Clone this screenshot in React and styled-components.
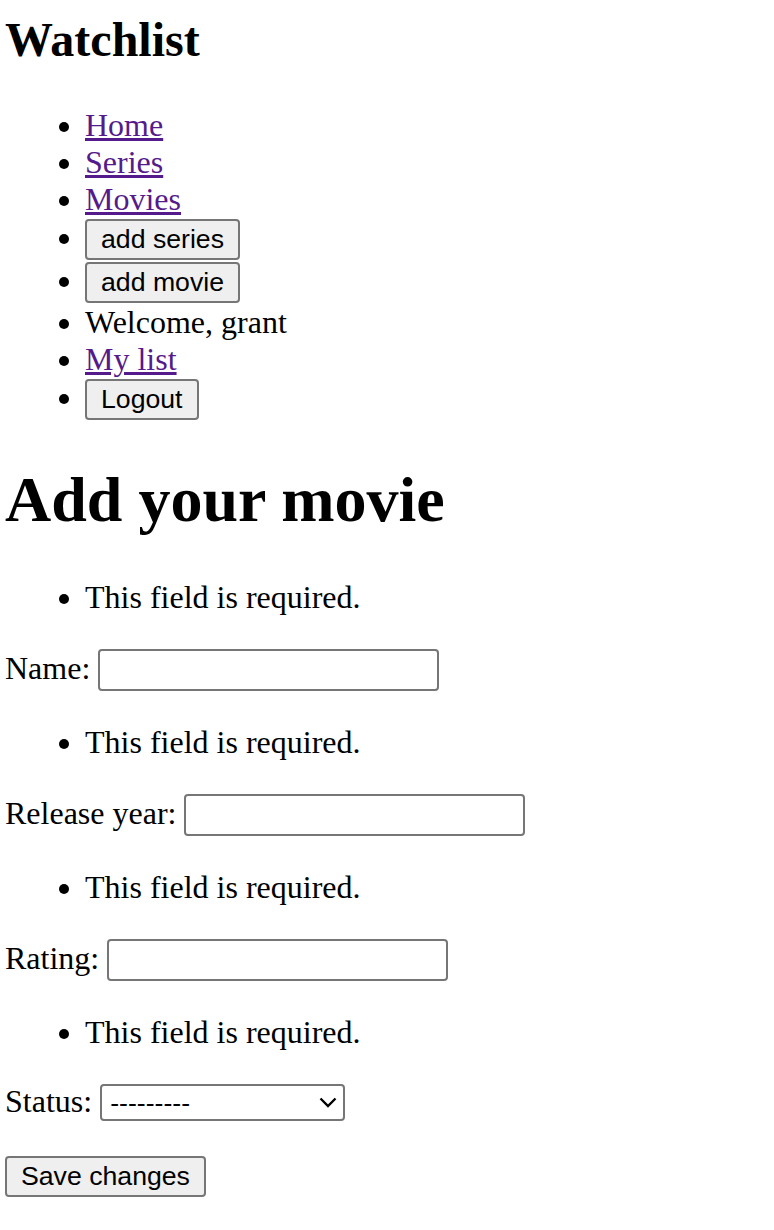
import React from 'react'
import styled, { createGlobalStyle } from 'styled-components'

const GlobalStyle = createGlobalStyle`
  html, body {
    margin: 0;
    padding: 0;
    background: #ffffff;
  }
  body {
    font-family: 'Liberation Serif', 'Times New Roman', serif;
    font-size: 32px;
    color: #000000;
  }
`

const Page = styled.div`
  padding: 0 5px;
`

const SiteTitle = styled.h2`
  font-size: 48px;
  font-weight: bold;
  margin: 12px 0 40px;
`

const NavList = styled.ul`
  margin: 0;
  padding-left: 80px;
`

const NavItem = styled.li`
  line-height: normal;
`

const NavLink = styled.a`
  color: #551a8b;
  text-decoration: underline;
  text-decoration-thickness: 3px;
  text-underline-offset: 2px;
`

const Button = styled.button`
  font-family: 'Liberation Sans', Arial, sans-serif;
  font-size: 26.67px;
  color: #000000;
  background: #efefef;
  border: 2px solid #767676;
  border-radius: 4px;
  height: 41px;
  box-sizing: border-box;
  padding: 0 14px;
  margin: 1px 0;
  line-height: normal;
`

const PageTitle = styled.h1`
  font-size: 64px;
  font-weight: bold;
  margin: 42px 0;
`

const ErrorList = styled.ul`
  margin: 32px 0;
  padding-left: 80px;
`

const Field = styled.p`
  margin: 32px 0;
`

const Label = styled.label`
  margin-right: 8px;
`

const TextInput = styled.input`
  font-family: 'Liberation Sans', Arial, sans-serif;
  font-size: 26.67px;
  width: 341px;
  height: 42px;
  box-sizing: border-box;
  border: 2px solid #767676;
  border-radius: 4px;
  padding: 2px 4px;
  margin: 1px 0;
  background: #ffffff;
`

const SelectWrap = styled.span`
  position: relative;
  display: inline-block;
  vertical-align: top;
  margin: 1px 0 2px;
`

const Select = styled.select`
  appearance: none;
  display: block;
  font-family: 'Liberation Sans', Arial, sans-serif;
  font-size: 26.67px;
  width: 245px;
  height: 37px;
  box-sizing: border-box;
  border: 2px solid #767676;
  border-radius: 4px;
  background: #ffffff;
  color: #000000;
  padding: 0 40px 0 8px;
  margin: 0;
`

const Chevron = styled.svg`
  position: absolute;
  right: 8px;
  top: 13px;
  pointer-events: none;
`

const Actions = styled.div`
  margin: 32px 0;
`

const fields = [
  { id: 'name', label: 'Name:' },
  { id: 'year', label: 'Release year:' },
  { id: 'rating', label: 'Rating:' },
]

export default function App() {
  return (
    <Page>
      <GlobalStyle />
      <SiteTitle>Watchlist</SiteTitle>
      <NavList>
        <NavItem><NavLink href="#">Home</NavLink></NavItem>
        <NavItem><NavLink href="#">Series</NavLink></NavItem>
        <NavItem><NavLink href="#">Movies</NavLink></NavItem>
        <NavItem><Button>add series</Button></NavItem>
        <NavItem><Button>add movie</Button></NavItem>
        <NavItem>Welcome, grant</NavItem>
        <NavItem><NavLink href="#">My list</NavLink></NavItem>
        <NavItem><Button>Logout</Button></NavItem>
      </NavList>
      <PageTitle>Add your movie</PageTitle>
      <form onSubmit={e => e.preventDefault()}>
        {fields.map(f => (
          <React.Fragment key={f.id}>
            <ErrorList><li>This field is required.</li></ErrorList>
            <Field>
              <Label htmlFor={f.id}>{f.label}</Label>
              <TextInput id={f.id} type="text" />
            </Field>
          </React.Fragment>
        ))}
        <ErrorList><li>This field is required.</li></ErrorList>
        <Field>
          <Label htmlFor="status">Status:</Label>
          <SelectWrap>
            <Select id="status" defaultValue="">
              <option value="">---------</option>
            </Select>
            <Chevron width="18" height="11" viewBox="0 0 18 11">
              <path d="M1.5 1.5 L9 9 L16.5 1.5" fill="none" stroke="#000" strokeWidth="2.4" />
            </Chevron>
          </SelectWrap>
        </Field>
        <Actions>
          <Button type="submit">Save changes</Button>
        </Actions>
      </form>
    </Page>
  )
}
